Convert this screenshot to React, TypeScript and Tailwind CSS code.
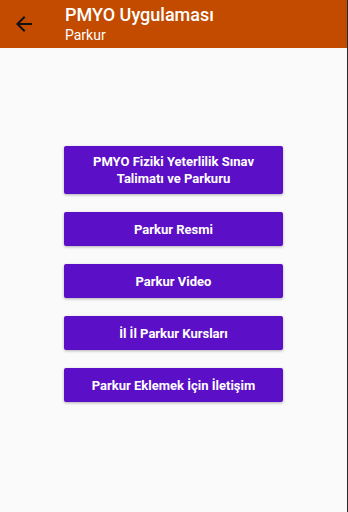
import React from 'react';

const buttons = [
  'PMYO Fiziki Yeterlilik Sınav Talimatı ve Parkuru',
  'Parkur Resmi',
  'Parkur Video',
  'İl İl Parkur Kursları',
  'Parkur Eklemek İçin İletişim',
];

const BackArrow = () => (
  <svg width="24" height="24" viewBox="0 0 24 24" className="text-[#111]">
    <path fill="currentColor" d="M20 11H7.83l5.59-5.59L12 4l-8 8 8 8 1.41-1.41L7.83 13H20v-2z" />
  </svg>
);

const App = () => {
  return (
    <div className="w-[348px] h-[512px] bg-[#fafafa] border-r border-[#2a2a2a] overflow-hidden" style={{ fontFamily: 'Roboto, "Noto Sans", sans-serif' }}>
      <div className="h-[48px] bg-[#c24b00] flex items-center">
        <div className="w-[65px] pl-[12px] flex items-center">
          <BackArrow />
        </div>
        <div className="flex flex-col text-white">
          <span className="text-[18px] leading-[22px] font-medium">PMYO Uygulaması</span>
          <span className="text-[14px] leading-[18px]">Parkur</span>
        </div>
      </div>
      <div className="flex flex-col items-center gap-[18px] pt-[98px]">
        {buttons.map((b, i) => (
          <button
            key={i}
            className={`w-[219px] ${i === 0 ? 'h-[48px]' : 'h-[34px]'} bg-[#5b0fc6] text-white text-[13px] leading-[17px] font-bold px-4 rounded-[2px] shadow-[0_1px_3px_rgba(0,0,0,0.3)]`}
          >
            {b}
          </button>
        ))}
      </div>
    </div>
  );
};

export default App;
